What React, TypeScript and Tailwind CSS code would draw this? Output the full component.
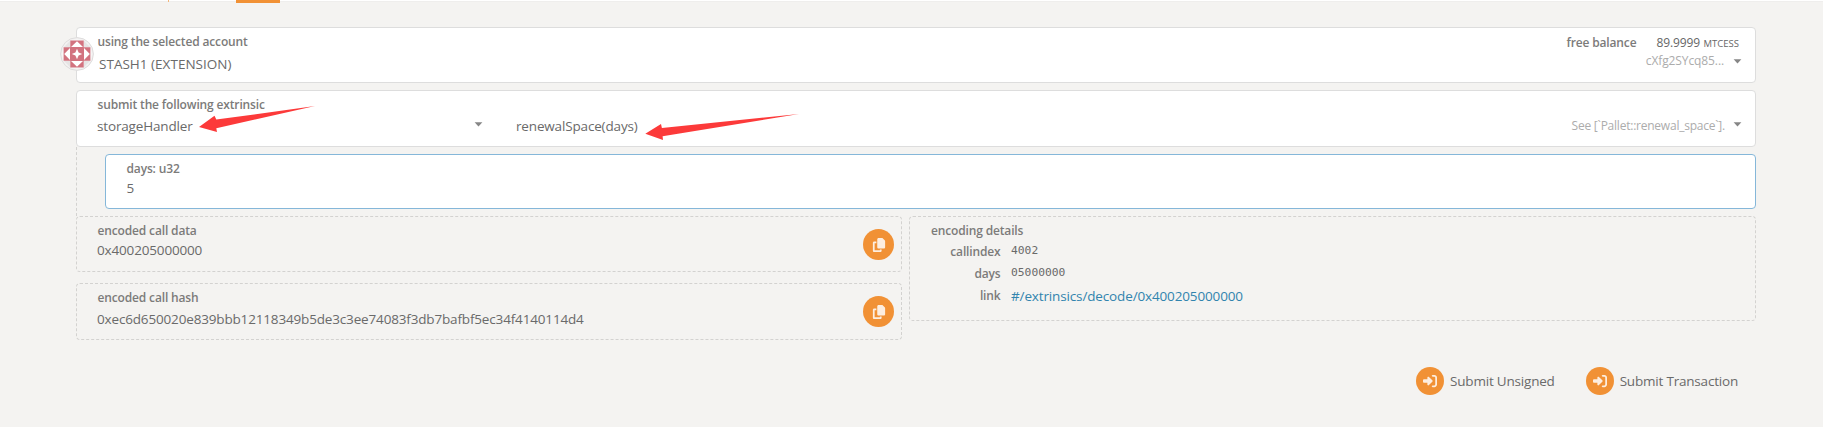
import type { ReactNode } from "react";
import { FaCopy, FaRightToBracket } from "react-icons/fa6";

const VALUE = "whitespace-nowrap text-[13.5px] leading-5 tracking-[-0.16px] text-[#6a6a6a]";
const MONO = "font-['DejaVu_Sans_Mono',monospace] text-[11.3px] leading-4 text-[#6a6a6a]";

function Label({ children, className = "" }: { children: ReactNode; className?: string }) {
  return (
    <div className={`whitespace-nowrap text-[12px] font-semibold leading-4 tracking-[-0.15px] text-[#7c7b7a] ${className}`}>
      {children}
    </div>
  );
}

function Caret({ className = "" }: { className?: string }) {
  return (
    <svg className={`h-[5px] w-[9px] shrink-0 ${className}`} viewBox="0 0 9 5">
      <path d="M0.6 0.2H8.4L4.5 4.4Z" fill="#868686" />
    </svg>
  );
}

function Identicon() {
  return (
    <svg className="absolute -left-[17px] top-[9px] size-[34px]" viewBox="0 0 34 34">
      <circle cx="17" cy="17" r="16.4" fill="#f3f1f1" stroke="#dedcdc" strokeWidth="1" />
      <circle cx="17" cy="17" r="14.6" fill="#fafafa" />
      <path d="M3.6 10.3L10.3 3.6V10.3ZM30.4 10.3L23.7 3.6V10.3ZM3.6 23.7L10.3 30.4V23.7ZM30.4 23.7L23.7 30.4V23.7Z" fill="#e6e4e4" />
      <path d="M10.3 3.6H23.7V10.3H30.4V23.7H23.7V30.4H10.3V23.7H3.6V10.3H10.3Z" fill="#d2737f" />
      <path
        d="M11 10L17 4.2L23 10ZM11 24L17 29.8L23 24ZM10 11L4.2 17L10 23ZM24 11L29.8 17L24 23Z"
        fill="#fff"
      />
      <path d="M17 11.8L18.6 15.4L22.2 17L18.6 18.6L17 22.2L15.4 18.6L11.8 17L15.4 15.4Z" fill="#fff" />
    </svg>
  );
}

function CopyButton() {
  return (
    <button className="mr-[7px] mt-[12px] flex size-[31px] shrink-0 items-center justify-center rounded-full bg-[#f19135]">
      <FaCopy className="size-[14px] text-[#fdeee0]" />
    </button>
  );
}

function SubmitButton({ children }: { children: ReactNode }) {
  return (
    <button className="flex items-center gap-[6px]">
      <span className="flex size-7 items-center justify-center rounded-full bg-[#f19135]">
        <FaRightToBracket className="size-[14px] text-[#fdeee0]" />
      </span>
      <span className="whitespace-nowrap text-[13.5px] leading-5 tracking-[-0.2px] text-[#6a6a6a]">{children}</span>
    </button>
  );
}

function Detail({ label, children }: { label: string; children: ReactNode }) {
  return (
    <div className="flex h-[22px] items-center gap-[10.5px]">
      <Label className="w-[69.5px] pt-px text-right">{label}</Label>
      {children}
    </div>
  );
}

export default function App() {
  return (
    <div className="h-[427px] w-[1823px] overflow-hidden bg-[#f4f3f1] font-['Open_Sans','Noto_Sans',sans-serif]">
      <header className="flex h-[3px] items-start bg-linear-to-b from-white from-33% via-[#eae9e8] via-33% to-[#f4f3f1] to-66%">
        <span className="ml-[168px] h-[2px] w-px bg-[#f3b77c]" />
        <span className="ml-[67px] h-[3px] w-11 bg-[#f19135]" />
      </header>

      <main className="ml-[76px] mt-6 w-[1680px]">
        <section className="relative flex h-14 justify-between rounded border border-[#dddddd] bg-white pl-5 pt-[6px]">
          <Identicon />
          <div>
            <Label className="ml-[0.5px]">using the selected account</Label>
            <div className="ml-[2px] mt-1 whitespace-nowrap text-[13.5px] leading-5 tracking-[0.02px] text-[#6a6a6a]">
              STASH1 (EXTENSION)
            </div>
          </div>
          <div className="mr-[13px] pt-px">
            <div className="mr-[3px] flex items-baseline justify-end">
              <Label className="mr-5">free balance</Label>
              <span className="text-[12px] leading-4 tracking-[-0.1px] text-[#666666]">89.9999</span>
              <span className="ml-[3.5px] text-[9.5px] leading-4 text-[#666666]">MTCESS</span>
            </div>
            <div className="mt-px flex items-center justify-end gap-[9px]">
              <span className="text-[12px] leading-4 tracking-[-0.1px] text-[#acacac]">cXfg2SYcq85...</span>
              <Caret />
            </div>
          </div>
        </section>

        <section className="relative mt-[7px] h-[57px] rounded border border-[#dddddd] bg-white pl-5 pt-[6px]">
          <Label className="ml-[0.5px]">submit the following extrinsic</Label>
          <div className="mt-[3px] flex h-5 items-center">
            <div className="flex w-[419px] items-center justify-between">
              <span className={VALUE}>storageHandler</span>
              <Caret className="mr-[33px] -mt-[3px]" />
            </div>
            <div className="flex grow items-center justify-between">
              <span className={VALUE}>renewalSpace(days)</span>
              <div className="mr-[13px] flex items-center gap-[8px]">
                <span className="text-[12px] leading-4 tracking-[-0.23px] text-[#acacac]">
                  {"See [`Pallet::renewal_space`]."}
                </span>
                <Caret className="-mt-[3px]" />
              </div>
            </div>
          </div>
          <svg className="pointer-events-none absolute left-[121px] top-[13px] h-[32px] w-[605px]" viewBox="198 104 605 32" overflow="visible">
            <path d="M199 127L214.5 115.8L216.3 119.6L315 106L216.3 128.2L217 132Z" fill="#fc3a3a" />
            <path d="M645.3 133.7L661 124L661.9 128L799 114L662.6 136.3L663 140Z" fill="#fc3a3a" />
          </svg>
        </section>

        <div className="h-[69px] border-l border-dashed border-[#d3d2d0] pl-7 pt-[7px]">
          <section className="h-[55px] rounded border border-[#85b7d9] bg-white pl-[20.5px] pt-[6px]">
            <Label>days: u32</Label>
            <div className={`mt-px ${VALUE}`}>5</div>
          </section>
        </div>

        <div className="flex items-start gap-[7px]">
          <div className="flex w-[826px] flex-col gap-[11px]">
            <section className="flex h-14 items-start justify-between rounded border border-dashed border-[#d3d2d0] pl-5">
              <div className="pt-[6px]">
                <Label className="ml-[0.5px]">encoded call data</Label>
                <div className={`mt-px ${VALUE}`}>0x400205000000</div>
              </div>
              <CopyButton />
            </section>
            <section className="flex h-[57px] items-start justify-between rounded border border-dashed border-[#d3d2d0] pl-5">
              <div className="pt-[6px]">
                <Label className="ml-[0.5px]">encoded call hash</Label>
                <div className={`mt-[3px] ${VALUE}`}>
                  0xec6d650020e839bbb12118349b5de3c3ee74083f3db7bafbf5ec34f4140114d4
                </div>
              </div>
              <CopyButton />
            </section>
          </div>
          <section className="h-[105px] grow rounded border border-dashed border-[#d3d2d0] pl-[21px] pt-[6px]">
            <Label>encoding details</Label>
            <div className="mt-px">
              <Detail label="callindex">
                <span className={MONO}>4002</span>
              </Detail>
              <Detail label="days">
                <span className={MONO}>05000000</span>
              </Detail>
              <Detail label="link">
                <a
                  className="whitespace-nowrap pt-[2px] text-[13.5px] leading-5 tracking-[-0.14px] text-[#3184ae]"
                  href="#/extrinsics/decode/0x400205000000"
                >
                  #/extrinsics/decode/0x400205000000
                </a>
              </Detail>
            </div>
          </section>
        </div>

        <footer className="mr-[18px] mt-[27px] flex justify-end gap-[31px]">
          <SubmitButton>Submit Unsigned</SubmitButton>
          <SubmitButton>Submit Transaction</SubmitButton>
        </footer>
      </main>
    </div>
  );
}
